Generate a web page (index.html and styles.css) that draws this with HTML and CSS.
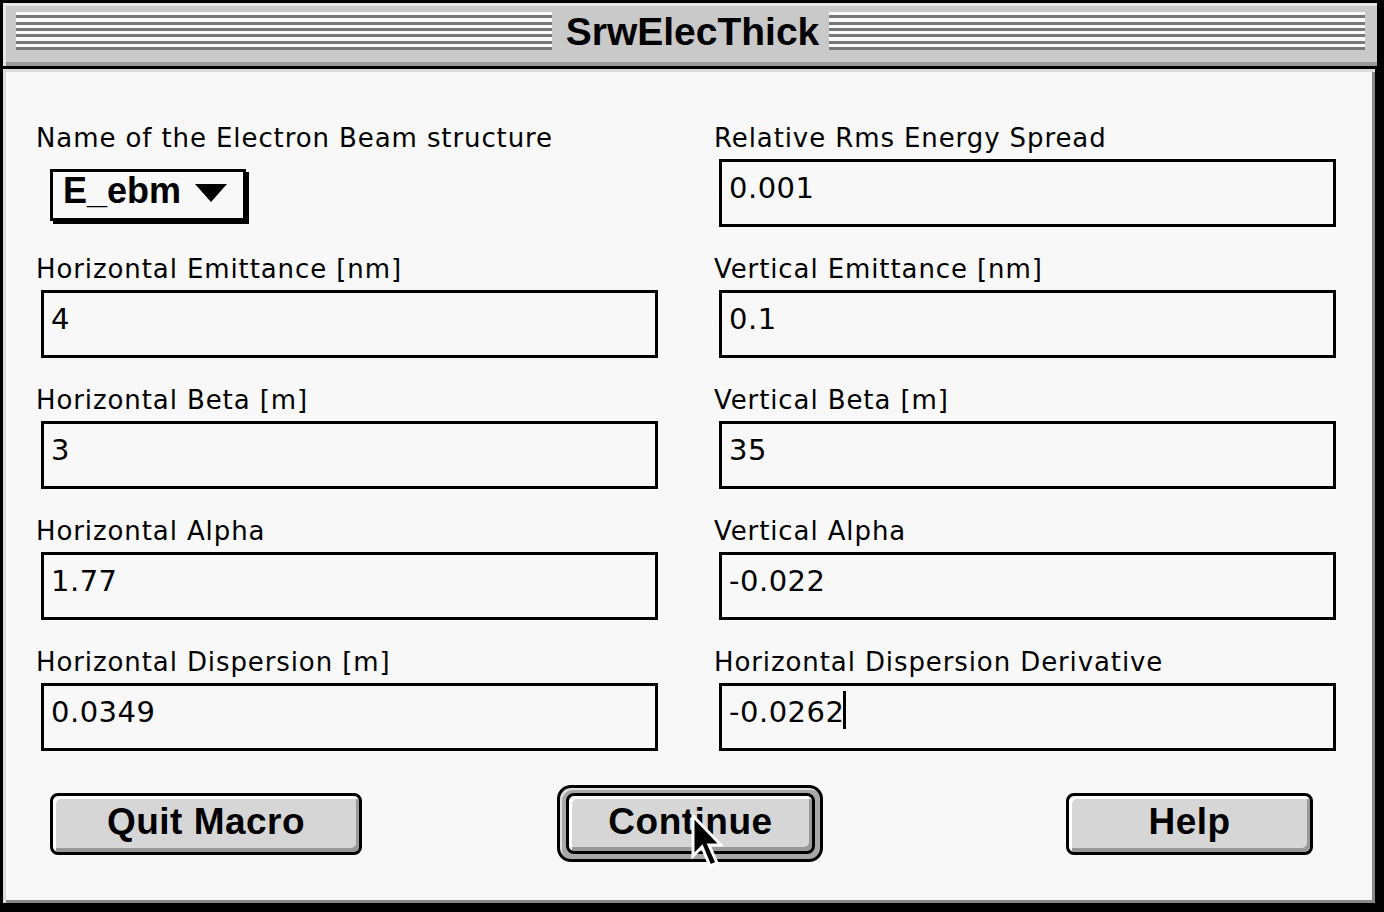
FILE: index.html
```html
<!DOCTYPE html>
<html>
<head>
<meta charset="utf-8">
<title>SrwElecThick</title>
<link rel="stylesheet" href="styles.css">
</head>
<body>
<div class="window">
  <div class="titlebar">
    <div class="stripes"><span class="title">SrwElecThick</span></div>
  </div>
  <div class="content">
    <div class="grid">
      <div class="field">
        <div class="label">Name of the Electron Beam structure</div>
        <div class="popup"><span class="popup-text">E_ebm</span><span class="tri"></span></div>
      </div>
      <div class="field">
        <div class="label">Relative Rms Energy Spread</div>
        <div class="input">0.001</div>
      </div>
      <div class="field">
        <div class="label">Horizontal Emittance [nm]</div>
        <div class="input">4</div>
      </div>
      <div class="field">
        <div class="label">Vertical Emittance [nm]</div>
        <div class="input">0.1</div>
      </div>
      <div class="field">
        <div class="label">Horizontal Beta [m]</div>
        <div class="input">3</div>
      </div>
      <div class="field">
        <div class="label">Vertical Beta [m]</div>
        <div class="input">35</div>
      </div>
      <div class="field">
        <div class="label">Horizontal Alpha</div>
        <div class="input">1.77</div>
      </div>
      <div class="field">
        <div class="label">Vertical Alpha</div>
        <div class="input">-0.022</div>
      </div>
      <div class="field">
        <div class="label">Horizontal Dispersion [m]</div>
        <div class="input">0.0349</div>
      </div>
      <div class="field">
        <div class="label">Horizontal Dispersion Derivative</div>
        <div class="input">-0.0262<span class="caret"></span></div>
      </div>
    </div>
    <div class="buttons">
      <div class="btn btn-quit">Quit Macro</div>
      <div class="ring">
        <div class="btn btn-continue">Continue</div>
        <svg class="cursor" width="34" height="56" viewBox="-3 -3 34 56">
          <polygon points="0,0 0,40 9,31 17,50 24,47 16,29 28,29" fill="#000" stroke="#fff" stroke-width="3" stroke-linejoin="miter"/>
        </svg>
      </div>
      <div class="btn btn-help">Help</div>
    </div>
  </div>
</div>
</body>
</html>
```
FILE: styles.css
```css
html, body {
  margin: 0;
  padding: 0;
  background: #000;
}

.window {
  width: 1384px;
  height: 912px;
  box-sizing: border-box;
  background: #000;
  padding: 3px 7px 9px 3px;
  display: flex;
  flex-direction: column;
}

.titlebar {
  flex: none;
  background: #c9c9c9;
  border-bottom: 3px solid #000;
  box-shadow: inset 3px 3px 0 #e6e6e6, inset 0 -4px 0 #999;
  padding: 9px 12px 0 13px;
  box-sizing: content-box;
  height: 54px;
}

.stripes {
  height: 38px;
  background: repeating-linear-gradient(to bottom, #fafafa 0, #fafafa 3.33px, #777 3.33px, #777 6.33px);
  display: flex;
  justify-content: center;
  align-items: center;
}

.title {
  background: #c9c9c9;
  height: 48px;
  margin-top: 2px;
  padding: 0 10px 0 14px;
  font-family: "Liberation Sans", "DejaVu Sans", sans-serif;
  font-weight: bold;
  font-size: 39px;
  line-height: 48px;
  color: #000;
}

.content {
  flex: 1;
  margin-right: 2px;
  background: #f8f8f8;
  box-shadow: inset 3px 3px 0 #dcdcdc, inset -3px -3px 0 #888;
  padding: 56px 0 0 33px;
}

.grid {
  display: grid;
  grid-template-columns: 622px 622px;
  column-gap: 56px;
  row-gap: 29px;
}

.field {
  display: flex;
  flex-direction: column;
  align-items: flex-start;
}

.label {
  font-family: "DejaVu Sans", sans-serif;
  font-size: 26px;
  line-height: 26px;
  letter-spacing: 0.9px;
  color: #000;
  height: 26px;
  white-space: nowrap;
}

.input {
  margin-top: 8px;
  margin-left: 5px;
  width: 617px;
  height: 68px;
  box-sizing: border-box;
  border: 3px solid #000;
  background: #f8f8f8;
  font-family: "DejaVu Sans", sans-serif;
  font-size: 29px;
  line-height: 29px;
  letter-spacing: 0.5px;
  padding: 12px 0 0 7px;
  color: #000;
  white-space: nowrap;
}

.caret {
  position: relative;
  display: inline-block;
  width: 3px;
  height: 0;
}

.caret::after {
  content: "";
  position: absolute;
  left: -1px;
  top: -31px;
  width: 3px;
  height: 38px;
  background: #000;
}

.popup {
  margin-top: 18px;
  margin-left: 14px;
  width: 196px;
  height: 52px;
  box-sizing: border-box;
  border: 3px solid #000;
  box-shadow: 3px 3px 0 #000;
  background: #f8f8f8;
  display: flex;
  align-items: flex-start;
  padding: 1px 0 0 10px;
}

.popup-text {
  font-family: "Liberation Sans", "DejaVu Sans", sans-serif;
  font-weight: bold;
  font-size: 36px;
  line-height: 36px;
  color: #000;
}

.tri {
  width: 0;
  height: 0;
  border-left: 16px solid transparent;
  border-right: 16px solid transparent;
  border-top: 18px solid #000;
  margin: 11px 0 0 14px;
}

.buttons {
  display: flex;
  align-items: center;
  margin-top: 34px;
  padding-left: 14px;
  height: 77px;
}

.btn {
  box-sizing: border-box;
  height: 62px;
  border: 3px solid #000;
  border-radius: 8px;
  background: #d6d6d6;
  box-shadow: inset 3px 3px 0 #fff, inset -3px -4px 0 #999;
  font-family: "Liberation Sans", "DejaVu Sans", sans-serif;
  font-weight: bold;
  font-size: 37px;
  line-height: 52px;
  text-align: center;
  color: #000;
  letter-spacing: 0.5px;
}

.btn-quit {
  width: 312px;
}

.ring {
  position: relative;
  margin-left: 195px;
  width: 266px;
  height: 77px;
  box-sizing: border-box;
  border: 3px solid #000;
  border-radius: 14px;
  background: #a8a8a8;
  box-shadow: inset 2px 2px 0 #e0e0e0;
  padding: 5px 5px 5px 6px;
}

.btn-continue {
  width: 100%;
  height: 100%;
}

.cursor {
  position: absolute;
  left: 130px;
  top: 25px;
}

.btn-help {
  margin-left: 243px;
  width: 247px;
}
```
